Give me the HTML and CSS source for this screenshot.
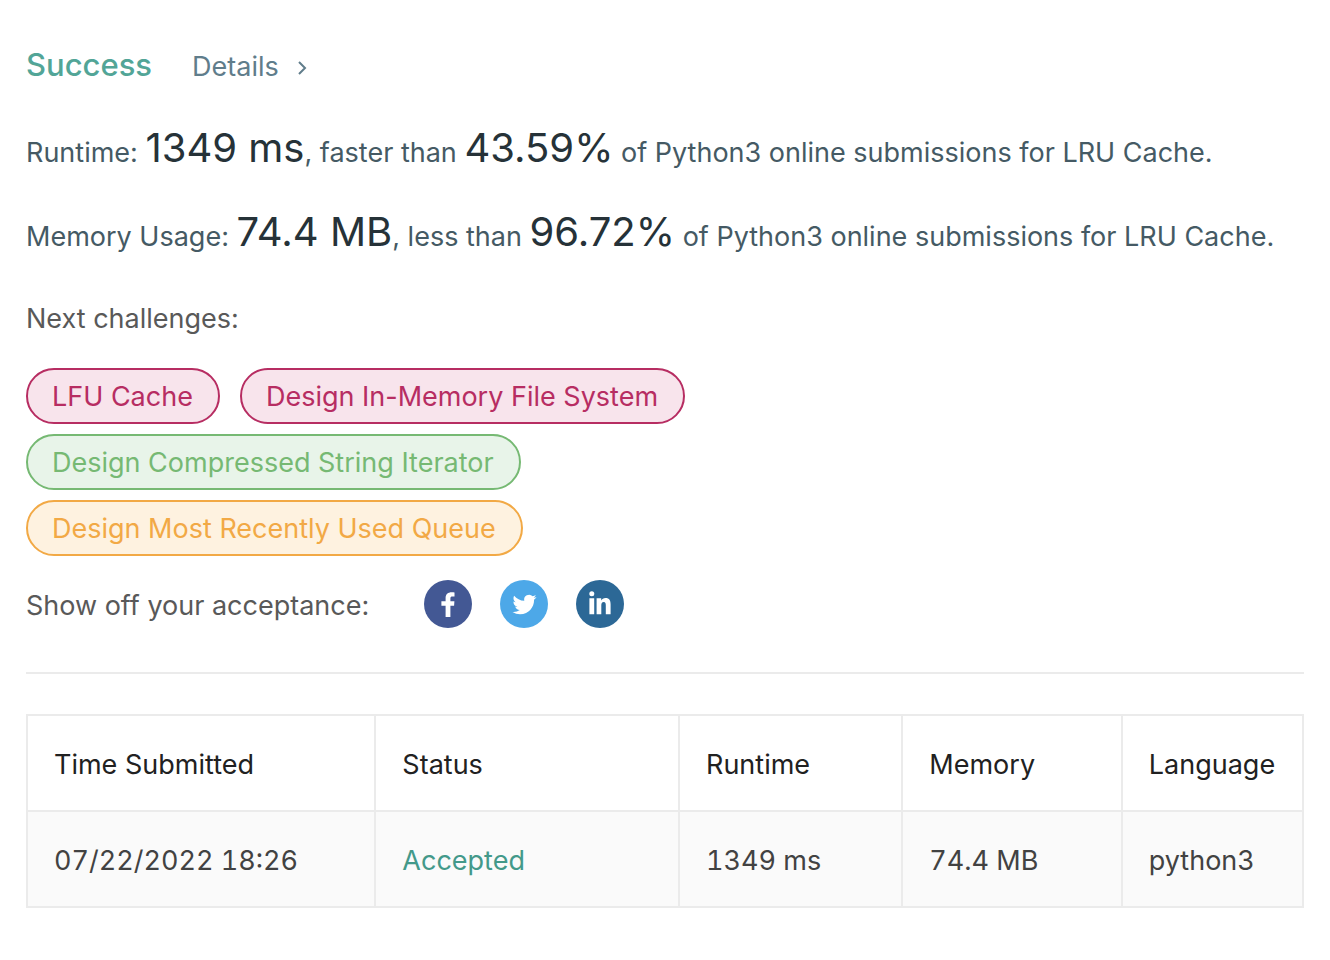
FILE: index.html
```html
<!DOCTYPE html>
<html lang="en">
<head>
<meta charset="utf-8">
<title>Submission Result</title>
<link rel="stylesheet" href="styles.css">
</head>
<body>
<main class="result">
  <header class="result-header">
    <h1 class="status">Success</h1>
    <a class="details" href="#details">Details
      <svg class="chevron" viewBox="0 0 10 16" aria-hidden="true"><path d="M2 2l6 6-6 6"/></svg>
    </a>
  </header>
  <p class="stat">Runtime: <span class="value">1349 ms</span>, faster than <span class="value">43.59%</span> of Python3 online submissions for LRU Cache.</p>
  <p class="stat">Memory Usage: <span class="value">74.4 MB</span>, less than <span class="value">96.72%</span> of Python3 online submissions for LRU Cache.</p>
  <p class="next-label">Next challenges:</p>
  <nav class="challenges" aria-label="Next challenges">
    <a class="tag hard" href="#lfu">LFU Cache</a>
    <a class="tag hard" href="#fs">Design In-Memory File System</a>
    <a class="tag easy" href="#iterator">Design Compressed String Iterator</a>
    <a class="tag medium" href="#queue">Design Most Recently Used Queue</a>
  </nav>
  <div class="share">
    <span class="share-label">Show off your acceptance:</span>
    <a class="social facebook" href="#facebook" aria-label="Facebook"><svg viewBox="0 0 48 48"><path d="M26.400 37V25.800h3.700l.3-4.600h-4v-2.600c0-1.400.6-2 1.900-2h2.200v-4.100c-.6-.1-1.700-.2-2.700-.2-4 0-6.200 2-6.200 6v2.900h-4.200v4.600h4.200V37z"/></svg></a>
    <a class="social twitter" href="#twitter" aria-label="Twitter"><svg viewBox="0 0 48 48"><g transform="translate(12.500 12.500)"><path d="M23.953 4.570a10 10 0 01-2.825.775 4.958 4.958 0 002.163-2.723c-.951.555-2.005.959-3.127 1.184a4.920 4.920 0 00-8.384 4.482C7.690 8.095 4.067 6.130 1.640 3.162a4.822 4.822 0 00-.666 2.475c0 1.710.870 3.213 2.188 4.096a4.904 4.904 0 01-2.228-.616v.060a4.923 4.923 0 003.946 4.827 4.996 4.996 0 01-2.212.085 4.936 4.936 0 004.604 3.417 9.867 9.867 0 01-6.102 2.105c-.390 0-.779-.023-1.170-.067a13.995 13.995 0 007.557 2.209c9.053 0 13.998-7.496 13.998-13.985 0-.210 0-.420-.015-.630A9.935 9.935 0 0024 4.590z"/></g></svg></a>
    <a class="social linkedin" href="#linkedin" aria-label="LinkedIn"><svg viewBox="0 0 48 48"><circle cx="15.800" cy="13.700" r="2.500"/><path d="M13.400 18.300h4.800v16h-4.800zM20.600 18.300h4.600v2.100c.8-1.400 2.300-2.500 4.300-2.500 4 0 5.100 2.600 5.100 6.500v9.900h-4.800v-8.700c0-2.100-.3-3.500-2.100-3.500s-2.400 1.400-2.400 3.500v8.700h-4.700z"/></svg></a>
  </div>
  <hr class="divider">
  <table class="submissions">
    <thead><tr><th class="time">Time Submitted</th><th class="state">Status</th><th class="run">Runtime</th><th class="mem">Memory</th><th>Language</th></tr></thead>
    <tbody><tr><td>07/22/2022 18:26</td><td><a class="accepted" href="#submission">Accepted</a></td><td>1349 ms</td><td>74.4 MB</td><td>python3</td></tr></tbody>
  </table>
</main>
</body>
</html>
```
FILE: styles.css
```css
* { box-sizing: border-box; }
body { margin: 0; background: #fff; color: #455a64; font: 27px/40px Inter, sans-serif; }
a { text-decoration: none; color: inherit; }
.result { padding: 44px 26px; }
.result-header { display: flex; align-items: baseline; gap: 40px; margin-bottom: 43px; line-height: 42px; }
.status { margin: 0; font-size: 31px; font-weight: 500; color: #52a597; }
.details { display: flex; align-items: center; gap: 18px; color: #607d8b; }
.chevron { width: 10px; height: 16px; margin-top: 2px; fill: none; stroke: currentColor; stroke-width: 2; }
.stat { margin: 0 0 40px; line-height: 44px; }
.value { font-size: 40px; line-height: 32px; color: #263238; }
.next-label { margin: 0 0 29px; color: #595959; }
.challenges { display: flex; flex-wrap: wrap; gap: 10px 20px; max-width: 700px; }
.tag { padding: 7px 25px 5px 24px; border: 2px solid; border-radius: 28px; }
.hard { color: #b72d62; background: #f8e4ec; }
.easy { color: #76b973; background: #e8f4e9; }
.medium { color: #f2a945; background: #fef2e0; }
.share { display: flex; align-items: center; gap: 28px; margin-top: 24px; color: #595959; }
.share-label { margin-right: 27px; padding-top: 4px; }
.social { width: 48px; height: 48px; border-radius: 50%; }
.social svg { display: block; fill: #fff; }
.facebook { background: #435894; }
.twitter { background: #4da8e8; }
.linkedin { background: #2c6896; }
.divider { margin: 44px 0 40px; border: 0; border-top: 2px solid #ebebeb; }
.submissions { width: 100%; border-collapse: collapse; color: #424242; line-height: 42px; }
.submissions th, .submissions td { padding: 28px 26px 24px; border: 2px solid #ebebeb; text-align: left; white-space: nowrap; }
.submissions th { font-weight: 400; color: #212121; }
.submissions td { background: #fafafa; font-variant-numeric: tabular-nums; }
.time { width: 27.3%; }
.state { width: 23.8%; }
.run { width: 17.5%; }
.mem { width: 17.2%; }
.accepted { color: #43998a; }
```
